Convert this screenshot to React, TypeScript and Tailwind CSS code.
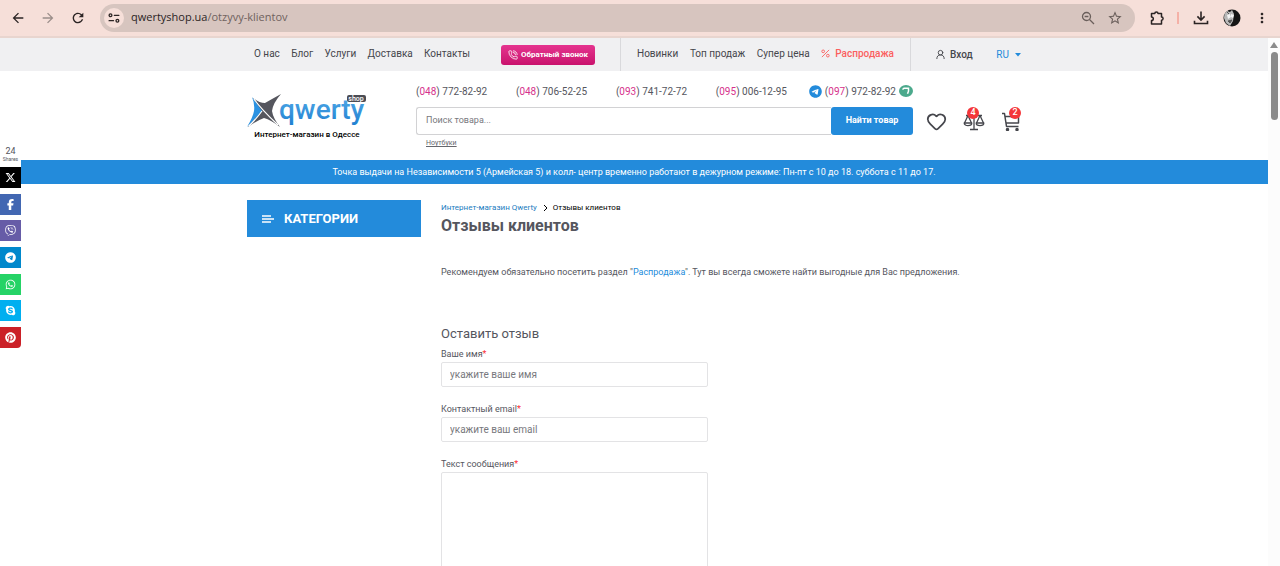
import React, { useState } from 'react'
import clsx from 'clsx'
import {
  MdArrowBack,
  MdArrowForward,
  MdRefresh,
  MdStarBorder,
  MdMoreVert,
} from 'react-icons/md'
import { FaXTwitter, FaFacebookF, FaViber, FaTelegram, FaWhatsapp, FaSkype, FaPinterest } from 'react-icons/fa6'
import { Heart, PhoneCall, UserRound } from 'lucide-react'

const infoLinks = ['О нас', 'Блог', 'Услуги', 'Доставка', 'Контакты']
const shopLinks = ['Новинки', 'Топ продаж', 'Супер цена']

const phones = [
  { code: '048', number: '772-82-92' },
  { code: '048', number: '706-52-25' },
  { code: '093', number: '741-72-72' },
  { code: '095', number: '006-12-95' },
]

const shares = [
  { name: 'X', icon: FaXTwitter, color: 'bg-black' },
  { name: 'Facebook', icon: FaFacebookF, color: 'bg-[#4267b2]' },
  { name: 'Viber', icon: FaViber, color: 'bg-[#665ca7]' },
  { name: 'Telegram', icon: FaTelegram, color: 'bg-[#0088cc]' },
  { name: 'WhatsApp', icon: FaWhatsapp, color: 'bg-[#25d366]' },
  { name: 'Skype', icon: FaSkype, color: 'bg-[#00aff0]' },
  { name: 'Pinterest', icon: FaPinterest, color: 'bg-[#cb2027] rounded-br-sm' },
]

const BrowserBar: React.FC = () => (
  <div className="flex h-[38px] shrink-0 items-center border-b-2 border-[#e8d5cf] bg-[#f6dfd9] pb-[1px] pl-[10px] pr-[10px] text-[#2b2424]">
    <button aria-label="Назад" className="w-[30px]"><MdArrowBack size={16} /></button>
    <button aria-label="Вперёд" className="w-[30px] text-[#9b8e8a]"><MdArrowForward size={16} /></button>
    <button aria-label="Обновить" className="w-[30px]"><MdRefresh size={16} /></button>
    <div className="flex h-7 flex-1 items-center rounded-full bg-[#d7c5bf] pl-1 pr-3">
      <button aria-label="Сведения о сайте" className="flex size-5 items-center justify-center rounded-full bg-[#f6dfd9]">
        <svg viewBox="0 0 12 10" className="h-[10px] w-3" fill="none" stroke="currentColor" strokeWidth="1.3" strokeLinecap="round">
          <circle cx="2.5" cy="2.3" r="1.4" />
          <path d="M6.3 2.3h4.6M1.1 7.7h4.4" />
          <circle cx="9.4" cy="7.7" r="1.4" />
        </svg>
      </button>
      <div className="ml-[7px] flex-1 font-['Open_Sans',sans-serif] text-[11px] text-[#6f625e]">
        <span className="text-[#2b2424]">qwertyshop.ua</span>/otzyvy-klientov
      </div>
      <button aria-label="Масштаб" className="mr-3 text-[#6a5f5b]">
        <svg viewBox="0 0 14 14" className="size-[14px]" fill="none" stroke="currentColor" strokeWidth="1.3">
          <circle cx="5.5" cy="5.5" r="4" />
          <path d="m8.5 8.5 4.5 4.5M3.6 5.5h3.8" />
        </svg>
      </button>
      <button aria-label="В закладки" className="text-[#6a5f5b]"><MdStarBorder size={16} /></button>
    </div>
    <button aria-label="Расширения" className="ml-[14px]">
      <svg viewBox="0 0 16 16" className="size-4" fill="none" stroke="currentColor" strokeWidth="1.5" strokeLinejoin="round">
        <path d="M2.5 3.5h3.3a1.6 1.6 0 0 1 3.2 0h3.5v3.5a1.6 1.6 0 0 1 0 3.2V14h-10v-3.4a1.8 1.8 0 0 0 0-3.6Z" />
      </svg>
    </button>
    <span className="ml-3 mr-3 h-3 w-[2px] bg-[#f5b1a7]" />
    <button aria-label="Загрузки" className="ml-[2px]">
      <svg viewBox="0 0 16 16" className="size-4" fill="none" stroke="currentColor" strokeWidth="1.6">
        <path d="M8 1.5v8.2M4.4 6.4 8 10l3.6-3.6M1.5 10.8v2.7h13v-2.7" />
      </svg>
    </button>
    <button aria-label="Профиль" className="ml-[14px]">
      <svg viewBox="0 0 18 18" className="size-[18px]">
        <circle cx="9" cy="9" r="8.5" fill="#151515" />
        <path d="M1.500 5 4 2l3 1 2-2 2 4-1 7-3 5-4-3-2-5Z" fill="#b9b9b9" />
        <path d="m4 6 3-1 1 3-3 2ZM8 5l3 1-1 3-2-1Z" fill="#f4f4f4" />
        <path d="m5 12 4-1-2 3ZM4 3l2 2" fill="#555" stroke="#555" />
      </svg>
    </button>
    <button aria-label="Меню" className="ml-[13px]"><MdMoreVert size={16} /></button>
  </div>
)

const TopBar: React.FC = () => (
  <div className="bg-[#f0f0f2]">
    <div className="mx-auto flex h-[33px] w-full max-w-[774px] items-stretch text-[10px] text-[#45464c]">
      <div className="flex w-[374px] items-center justify-between border-r border-[#d9d9dc] pl-[7px] pr-[25px]">
        <nav className="flex w-[216px] justify-between pb-[2px]">
          {infoLinks.map(link => <a key={link} href="#">{link}</a>)}
        </nav>
        <button className="flex h-5 w-[94px] items-center justify-center gap-[3px] rounded-[3px] bg-linear-to-b from-[#e5338f] to-[#c9116d] text-[8px] font-bold text-white">
          <PhoneCall size={10} />
          Обратный звонок
        </button>
      </div>
      <nav className="flex w-[290px] items-center justify-between border-r border-[#d9d9dc] px-4 pb-[2px]">
        {shopLinks.map(link => <a key={link} href="#">{link}</a>)}
        <a href="#" className="flex items-center gap-[5px] font-medium text-[#fb5f5f]">
          <svg viewBox="0 0 10 10" className="size-[9px]" fill="none" stroke="currentColor" strokeWidth="1">
            <path d="M9 1 1 9" />
            <circle cx="2.4" cy="2.6" r="1.5" />
            <circle cx="7.6" cy="7.4" r="1.5" />
          </svg>
          Распродажа
        </a>
      </nav>
      <div className="flex flex-1 items-center justify-between pl-6">
        <a href="#" className="flex items-center gap-1 font-medium"><UserRound size={11} />Вход</a>
        <button className="flex items-center gap-[6px] text-[#238bdb]">
          RU
          <svg viewBox="0 0 6 4" className="h-1 w-[6px]" fill="currentColor"><path d="M0 0h6L3 3.5Z" /></svg>
        </button>
      </div>
    </div>
  </div>
)

const Logo: React.FC = () => (
  <a href="#" className="block w-[120px]">
    <svg viewBox="0 0 120 36" className="h-9 w-[120px] overflow-visible">
      <defs>
        <linearGradient id="word" x1="0" y1="0" x2="0" y2="1">
          <stop offset="0" stopColor="#56aeea" />
          <stop offset="1" stopColor="#1f7fd0" />
        </linearGradient>
      </defs>
      <path d="M6 4Q12 9 18 9Q25 5 34 0Q26 9 25 17Q26 24 33 33Q24 26 17 24Q9 27 1 33Q7 24 9 17Q10 10 6 4Z" fill="#55565e" />
      <path d="M5 3Q11 11 15 17Q9 24 0 33Q6 23 7 17Q8 10 5 3Z" fill="#2b92e2" />
      <path d="M7 5Q14 15 31 31M15 17Q10 24 2 32" fill="none" stroke="#fff" strokeWidth="1.2" />
      <text x="32" y="25" fontSize="28" fontWeight="500" fontFamily="Roboto, sans-serif" fill="url(#word)">qwerty</text>
      <rect x="100" y="1" width="19" height="7" rx="2" fill="#4b4c54" />
      <text x="109" y="7" fontSize="7" fontWeight="500" textAnchor="middle" fontFamily="Roboto, sans-serif" fill="#fff">shop</text>
    </svg>
    <span className="block text-center text-[8px] font-medium leading-[10px] text-black">Интернет-магазин в Одессе</span>
  </a>
)

const Badge: React.FC<{ count: number }> = ({ count }) => (
  <span className="absolute -top-1 right-0 flex size-3 items-center justify-center rounded-full bg-[#f4363a] text-[9px] font-medium text-white">
    {count}
  </span>
)

const Phone: React.FC<{ code: string; number: string }> = ({ code, number }) => (
  <a href={`tel:${code}${number}`}>
    (<span className="text-[#d6318c]">{code}</span>) {number}
  </a>
)

const Header: React.FC = () => (
  <header className="mx-auto flex w-full max-w-[774px] pb-[13px] pt-[13px]">
    <div className="w-[169px] shrink-0 pt-[10px]"><Logo /></div>
    <div className="w-[497px]">
      <div className="flex h-[14px] items-center justify-between text-[10px] text-[#55565e]">
        <div className="flex w-[371px] justify-between">
          {phones.map(phone => <Phone key={phone.number} {...phone} />)}
        </div>
        <div className="flex items-center gap-[3px]">
          <FaTelegram size={13} className="text-[#238bdb]" />
          <Phone code="097" number="972-82-92" />
          <svg viewBox="0 0 14 12" className="h-3 w-[14px]">
            <ellipse cx="7" cy="6" rx="7" ry="6" fill="#4ba98c" />
            <path d="M3.5 4.5 5 3.200h4.500v3l-1 2.500" fill="none" stroke="#fff" strokeWidth="1.5" />
          </svg>
        </div>
      </div>
      <form className="mt-[9px] flex h-7" onSubmit={e => e.preventDefault()}>
        <input
          type="search"
          aria-label="Поиск товара"
          placeholder="Поиск товара..."
          className="min-w-0 flex-1 rounded-l-[3px] border border-r-0 border-[#d2d2d4] px-[9px] text-[9px] outline-none placeholder:text-[#77787d]"
        />
        <button className="w-[82px] rounded-[3px] bg-[#238bdb] text-[9px] font-bold text-white">Найти товар</button>
      </form>
      <a href="#" className="ml-[10px] mt-1 block w-fit text-[7px] leading-2 text-[#66676d] underline">Ноутбуки</a>
    </div>
    <div className="mt-[26px] flex h-[22px] flex-1 items-center justify-between self-start pl-[13px] text-[#45464c]">
      <a href="#" aria-label="Избранное"><Heart size={21} strokeWidth={2} /></a>
      <a href="#" aria-label="Сравнение" className="relative">
        <svg viewBox="0 0 22 20" className="h-5 w-[22px]" fill="none" stroke="currentColor" strokeWidth="1.3" strokeLinejoin="round">
          <path d="M11 2v16M7 18.5h8M3 4.5h16M5 4.5 1.5 12M5 4.5 8.5 12M17 4.5 13.5 12M17 4.5 20.5 12" />
          <path d="M1.2 12h7.6c0 3.5-7.6 3.5-7.6 0ZM13.2 12h7.6c0 3.5-7.6 3.5-7.6 0Z" />
        </svg>
        <span className="absolute right-[6px] top-0"><Badge count={4} /></span>
      </a>
      <a href="#" aria-label="Корзина" className="relative">
        <svg viewBox="0 0 20 20" className="size-5" fill="none" stroke="currentColor" strokeWidth="1.5" strokeLinejoin="round">
          <path d="M1 2.5h2.5L5.5 15.5H17.5M4 5.5H17.5V12H5" />
          <circle cx="6.5" cy="18.5" r="1" fill="currentColor" />
          <circle cx="16" cy="18.5" r="1" fill="currentColor" />
        </svg>
        <Badge count={2} />
      </a>
    </div>
  </header>
)

const ShareBar: React.FC = () => (
  <aside className="absolute left-0 top-[107px] w-[21px] text-[#55565e]">
    <div className="bg-white pb-[5px] pt-[1px] text-center">
      <div className="text-[9px] leading-[10px]">24</div>
      <div className="text-[5px] leading-[6px]">Shares</div>
    </div>
    <ul className="flex h-[181px] flex-col justify-between">
      {shares.map(({ name, icon: Icon, color }) => (
        <li key={name}>
          <a href="#" aria-label={name} className={clsx('flex h-[21px] items-center justify-center text-white', color)}>
            <Icon size={11} />
          </a>
        </li>
      ))}
    </ul>
  </aside>
)

const labelClass = 'block text-[9px] leading-3 text-[#55565e]'
const fieldClass =
  'mt-[2px] block w-full rounded-[2px] border border-[#e3e3e5] px-2 text-[10px] text-[#45464c] outline-none placeholder:text-[#77787d]'

const ReviewForm: React.FC = () => {
  const [values, setValues] = useState({ name: '', email: '', message: '' })

  const handleChange = (e: React.ChangeEvent<HTMLInputElement | HTMLTextAreaElement>) =>
    setValues(prev => ({ ...prev, [e.target.name]: e.target.value }))

  return (
    <form className="w-[267px]" onSubmit={e => e.preventDefault()}>
      <h2 className="text-[13px] leading-4 text-[#55565e]">Оставить отзыв</h2>
      <label htmlFor="name" className={clsx(labelClass, 'mt-[6px]')}>Ваше имя<span className="text-red-500">*</span></label>
      <input id="name" name="name" value={values.name} onChange={handleChange} placeholder="укажите ваше имя" className={clsx(fieldClass, 'h-[25px]')} />
      <label htmlFor="email" className={clsx(labelClass, 'mt-4')}>Контактный email<span className="text-red-500">*</span></label>
      <input id="email" name="email" type="email" value={values.email} onChange={handleChange} placeholder="укажите ваш email" className={clsx(fieldClass, 'h-[25px]')} />
      <label htmlFor="message" className={clsx(labelClass, 'mt-4')}>Текст сообщения<span className="text-red-500">*</span></label>
      <textarea id="message" name="message" rows={8} value={values.message} onChange={handleChange} className={clsx(fieldClass, 'resize-none')} />
    </form>
  )
}

const App: React.FC = () => (
  <div className="flex h-screen flex-col overflow-hidden bg-white font-[Roboto,sans-serif]">
    <BrowserBar />
    <div className="flex min-h-0 flex-1">
      <div className="relative min-w-0 flex-1 overflow-hidden">
        <TopBar />
        <Header />
        <div className="bg-[#238bdb] text-center text-[9px] leading-6 text-white">
          Точка выдачи на Независимости 5 (Армейская 5) и колл- центр временно работают в дежурном режиме: Пн-пт с 10 до 18. суббота с 11 до 17.
        </div>
        <main className="mx-auto flex w-full max-w-[774px] items-start gap-5 pt-4">
          <button className="flex h-[37px] w-[174px] shrink-0 items-center gap-[10px] bg-[#238bdb] pl-[15px] text-[13px] font-bold text-white">
            <svg viewBox="0 0 12 8" className="h-2 w-3" stroke="currentColor" strokeWidth="1.3">
              <path d="M0 1h9M0 4h12M0 7h9" />
            </svg>
            КАТЕГОРИИ
          </button>
          <div className="min-w-0 flex-1">
            <div className="flex items-center gap-[5px] pt-[2px] text-[8px] leading-3 text-black">
              <a href="#" className="text-[#1b7cc0]">Интернет-магазин Qwerty</a>
              <svg viewBox="0 0 6 6" className="size-[6px]" fill="none" stroke="currentColor"><path d="m2 0 3 3-3 3" /></svg>
              <span>Отзывы клиентов</span>
            </div>
            <h1 className="mt-[2px] text-[16px] font-bold leading-5 text-[#55565e]">Отзывы клиентов</h1>
            <p className="mb-12 mt-[30px] text-[9px] leading-3 text-[#55565e]">
              Рекомендуем обязательно посетить раздел "<a href="#" className="text-[#238bdb]">Распродажа</a>". Тут вы всегда сможете найти выгодные для Вас предложения.
            </p>
            <ReviewForm />
          </div>
        </main>
        <ShareBar />
      </div>
      <div className="flex w-3 shrink-0 flex-col items-center gap-1 bg-[#fcfcfc] pt-1">
        <svg viewBox="0 0 8 6" className="h-[6px] w-2" fill="#8b8b8b"><path d="M4 0 8 6H0Z" /></svg>
        <div className="h-[68px] w-[7px] rounded-full bg-[#8b8b8b]" />
      </div>
    </div>
  </div>
)

export default App
